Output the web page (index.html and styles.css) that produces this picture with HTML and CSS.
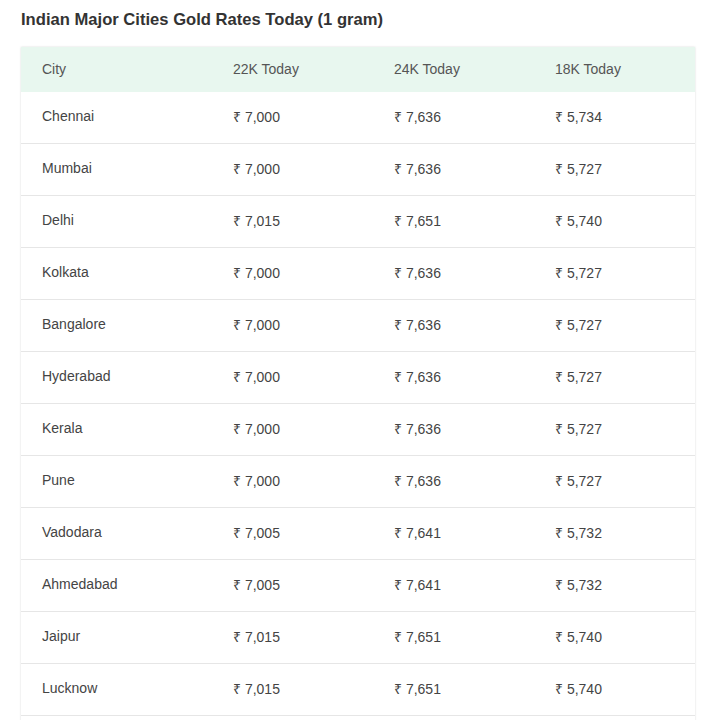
FILE: index.html
```html
<!DOCTYPE html>
<html>
<head>
<meta charset="utf-8">
<link rel="stylesheet" href="styles.css">
</head>
<body>
<div class="wrap">
  <h2 class="title">Indian Major Cities Gold Rates Today (1 gram)</h2>
  <table class="rates">
    <thead>
      <tr><th>City</th><th>22K Today</th><th>24K Today</th><th>18K Today</th></tr>
    </thead>
    <tbody>
      <tr><td>Chennai</td><td>₹ 7,000</td><td>₹ 7,636</td><td>₹ 5,734</td></tr>
      <tr><td>Mumbai</td><td>₹ 7,000</td><td>₹ 7,636</td><td>₹ 5,727</td></tr>
      <tr><td>Delhi</td><td>₹ 7,015</td><td>₹ 7,651</td><td>₹ 5,740</td></tr>
      <tr><td>Kolkata</td><td>₹ 7,000</td><td>₹ 7,636</td><td>₹ 5,727</td></tr>
      <tr><td>Bangalore</td><td>₹ 7,000</td><td>₹ 7,636</td><td>₹ 5,727</td></tr>
      <tr><td>Hyderabad</td><td>₹ 7,000</td><td>₹ 7,636</td><td>₹ 5,727</td></tr>
      <tr><td>Kerala</td><td>₹ 7,000</td><td>₹ 7,636</td><td>₹ 5,727</td></tr>
      <tr><td>Pune</td><td>₹ 7,000</td><td>₹ 7,636</td><td>₹ 5,727</td></tr>
      <tr><td>Vadodara</td><td>₹ 7,005</td><td>₹ 7,641</td><td>₹ 5,732</td></tr>
      <tr><td>Ahmedabad</td><td>₹ 7,005</td><td>₹ 7,641</td><td>₹ 5,732</td></tr>
      <tr><td>Jaipur</td><td>₹ 7,015</td><td>₹ 7,651</td><td>₹ 5,740</td></tr>
      <tr><td>Lucknow</td><td>₹ 7,015</td><td>₹ 7,651</td><td>₹ 5,740</td></tr>
      <tr><td>Coimbatore</td><td>₹ 7,000</td><td>₹ 7,636</td><td>₹ 5,727</td></tr>
    </tbody>
  </table>
</div>
</body>
</html>
```
FILE: styles.css
```css
html, body {
  margin: 0;
  padding: 0;
  background: #fff;
}
.wrap {
  padding: 10px 13px 0 21px;
  font-family: "Liberation Sans", Arial, sans-serif;
}
.title {
  margin: 0 0 17px 0;
  font-size: 16.6px;
  line-height: 20px;
  font-weight: bold;
  color: #333;
}
.rates {
  width: 674px;
  border-collapse: collapse;
  table-layout: fixed;
  box-shadow: 0 0 2px rgba(0,0,0,0.15);
  font-size: 14px;
  color: #444;
}
.rates th:first-child, .rates td:first-child { width: 170px; }
.rates th {
  background: #e8f7ef;
  font-weight: normal;
  text-align: left;
  height: 44px;
  padding: 0 0 1px 21px;
  color: #555;
}
.rates td {
  height: 48px;
  padding: 0 0 3px 21px;
  border-bottom: 1px solid #e6e6e6;
}
```
